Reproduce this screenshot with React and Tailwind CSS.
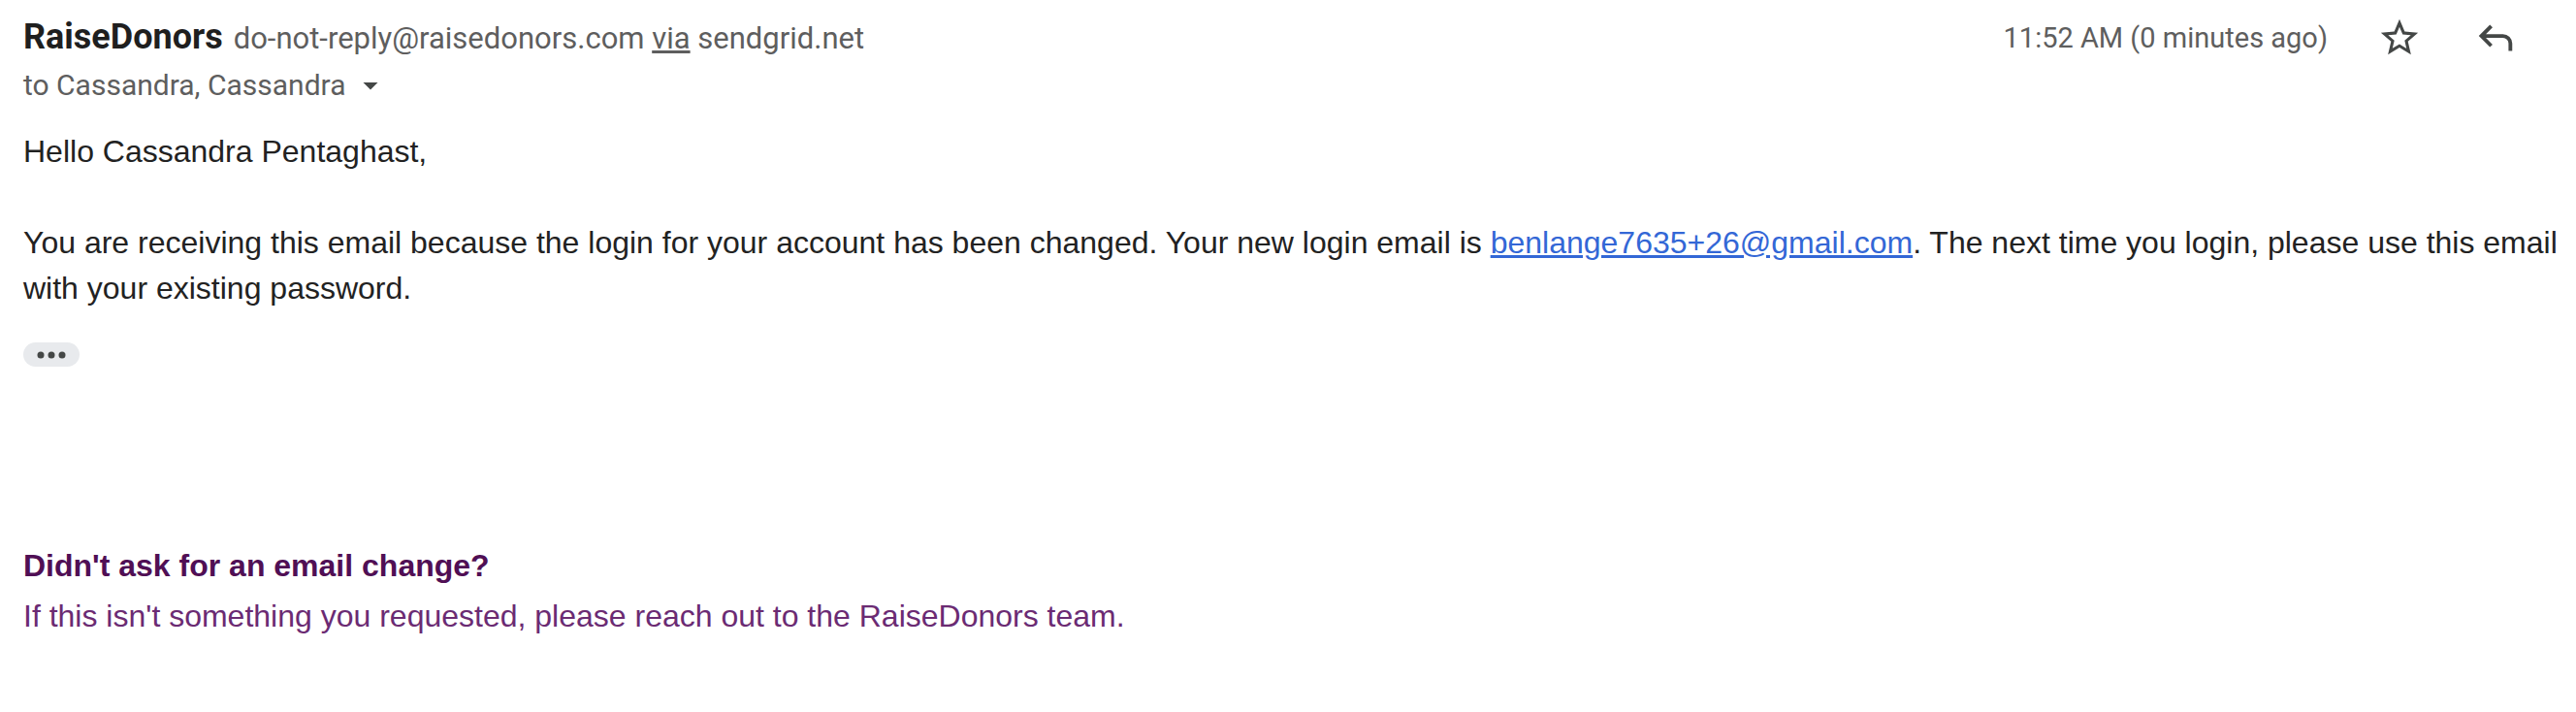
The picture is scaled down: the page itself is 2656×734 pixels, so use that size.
import React from "react";

function StarIcon() {
  return (
    <svg viewBox="0 0 24 24" className="w-[46px] h-[46px]" fill="#444746">
      <path d="M22 9.24l-7.19-.62L12 2 9.19 8.63 2 9.24l5.46 4.73L5.82 21 12 17.27 18.18 21l-1.63-7.03L22 9.24zM12 15.4l-3.76 2.27 1-4.28-3.32-2.88 4.38-.38L12 6.1l1.71 4.04 4.38.38-3.32 2.88 1 4.28L12 15.4z" />
    </svg>
  );
}

function ReplyIcon() {
  return (
    <svg viewBox="0 0 24 24" className="w-[46px] h-[46px]" fill="#444746">
      <path d="M19 19v-4q0-1.25-.875-2.125T16 12H6.825l3.6 3.6L9 17l-6-6 6-6 1.425 1.4-3.6 3.6H16q2.075 0 3.538 1.463T21 15v4h-2Z" />
    </svg>
  );
}

export default function App() {
  return (
    <div className="bg-white w-full h-[734px] px-[24px] pt-[15px] text-[#222222]">
      {/* header */}
      <div className="flex items-center justify-between h-[48px] font-['Roboto',sans-serif]">
        <div className="flex items-baseline whitespace-nowrap">
          <span className="text-[36px] leading-[48px] font-bold text-[#1f1f1f]">RaiseDonors</span>
          <span className="ml-[11px] text-[31px] leading-[48px] text-[#5e5e5e]">
            do-not-reply@raisedonors.com <span className="underline">via</span> sendgrid.net
          </span>
        </div>
        <div className="flex items-center pr-[36px]">
          <span className="text-[29px] leading-[48px] text-[#5e5e5e]">11:52 AM (0 minutes ago)</span>
          <button className="ml-[51px]">
            <StarIcon />
          </button>
          <button className="ml-[53px]">
            <ReplyIcon />
          </button>
        </div>
      </div>

      {/* recipients */}
      <div className="flex items-center h-[36px] mt-[7px] font-['Roboto',sans-serif] text-[30px] leading-[36px] text-[#5e5e5e]">
        <span>to Cassandra, Cassandra</span>
        <svg viewBox="0 0 24 24" className="w-[36px] h-[36px] ml-[8px]" fill="#444746">
          <path d="M7 10l5 5 5-5z" />
        </svg>
      </div>

      {/* body */}
      <div className="mt-[27px] mr-[-20px] font-['Liberation_Sans',Arial,sans-serif] text-[32px] leading-[47px]">
        <p>Hello Cassandra Pentaghast,</p>
        <p className="mt-[47px]">
          You are receiving this email because the login for your account has been changed. Your new login email is{" "}
          <a href="#" className="text-[#3367d6] underline">benlange7635+26@gmail.com</a>. The next time you login, please use this email with your existing password.
        </p>
      </div>

      <div className="mt-[32px] flex items-center justify-center w-[58px] h-[25px] rounded-full bg-[#e8eaed]">
        <svg viewBox="0 0 30 8" className="w-[30px] h-[8px]" fill="#444746">
          <circle cx="4" cy="4" r="3.5" />
          <circle cx="15" cy="4" r="3.5" />
          <circle cx="26" cy="4" r="3.5" />
        </svg>
      </div>

      {/* footer note */}
      <div className="mt-[182px] font-['Liberation_Sans',Arial,sans-serif] text-[32px] leading-[47px]">
        <p className="font-bold text-[#500f55]">Didn't ask for an email change?</p>
        <p className="mt-[5px] text-[#6b2b73]">If this isn't something you requested, please reach out to the RaiseDonors team.</p>
      </div>
    </div>
  );
}
